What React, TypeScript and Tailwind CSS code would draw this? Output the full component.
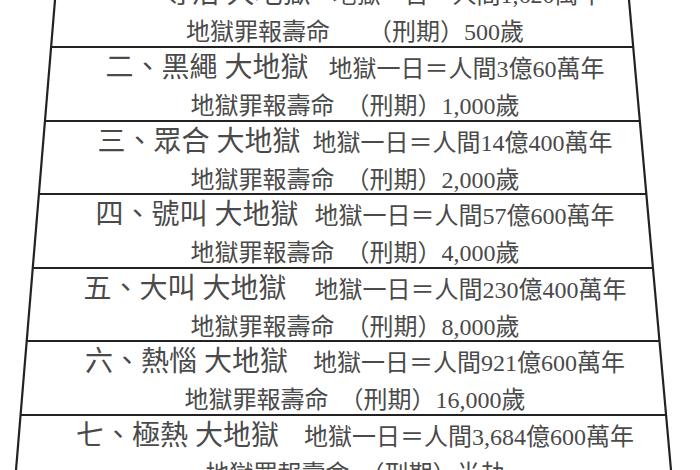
import * as React from 'react';

interface HellRow {
  name: string;
  rest: string;
  term: string;
  nameGap: string;
  termGap: string;
}

const rows: HellRow[] = [
  { name: '一、等活 大地獄', rest: '地獄一日＝人間1,620萬年', term: '500歲', nameGap: 'gap-[22px]', termGap: 'gap-[38px]' },
  { name: '二、黑繩 大地獄', rest: '地獄一日＝人間3億60萬年', term: '1,000歲', nameGap: 'gap-[20px]', termGap: 'gap-[11px]' },
  { name: '三、眾合 大地獄', rest: '地獄一日＝人間14億400萬年', term: '2,000歲', nameGap: 'gap-[12px]', termGap: 'gap-[11px]' },
  { name: '四、號叫 大地獄', rest: '地獄一日＝人間57億600萬年', term: '4,000歲', nameGap: 'gap-[16px]', termGap: 'gap-[11px]' },
  { name: '五、大叫 大地獄', rest: '地獄一日＝人間230億400萬年', term: '8,000歲', nameGap: 'gap-[28px]', termGap: 'gap-[11px]' },
  { name: '六、熱惱 大地獄', rest: '地獄一日＝人間921億600萬年', term: '16,000歲', nameGap: 'gap-[25px]', termGap: 'gap-[11px]' },
  { name: '七、極熱 大地獄', rest: '地獄一日＝人間3,684億600萬年', term: '半劫', nameGap: 'gap-[25px]', termGap: 'gap-[11px]' }
];

function Row({ row }: { row: HellRow }) {
  return (
    <div className="flex h-[73.6px] shrink-0 flex-col items-center border-b-2 border-[#222] pt-[5px]">
      <div className={`flex items-baseline whitespace-nowrap leading-[30px] ${row.nameGap}`}>
        <span className="text-[28px]">{row.name}</span>
        <span className="text-[24px]">{row.rest}</span>
      </div>
      <div className={`mt-[7px] flex items-baseline whitespace-nowrap text-[24px] leading-[30px] ${row.termGap}`}>
        <span>地獄罪報壽命</span>
        <span>（刑期）{row.term}</span>
      </div>
    </div>
  );
}

export default function App() {
  return (
    <div className="relative h-[470px] w-[700px] overflow-hidden bg-white font-['Liberation_Serif','Noto_Sans_CJK_TC',serif] text-[#4a4a4a]">
      <div className="flex h-full flex-col [clip-path:polygon(55px_0,629px_0,671px_470px,16px_470px)]">
        <div className="mt-[-25.6px] flex shrink-0 flex-col pl-[10px]">
          {rows.map((row) => (
            <Row key={row.name} row={row} />
          ))}
        </div>
      </div>
      <svg className="pointer-events-none absolute inset-0" width="700" height="470" viewBox="0 0 700 470">
        <line x1="55" y1="0" x2="16" y2="470" stroke="#222" strokeWidth="2.2" />
        <line x1="629" y1="0" x2="671" y2="470" stroke="#222" strokeWidth="2.2" />
      </svg>
    </div>
  );
}
